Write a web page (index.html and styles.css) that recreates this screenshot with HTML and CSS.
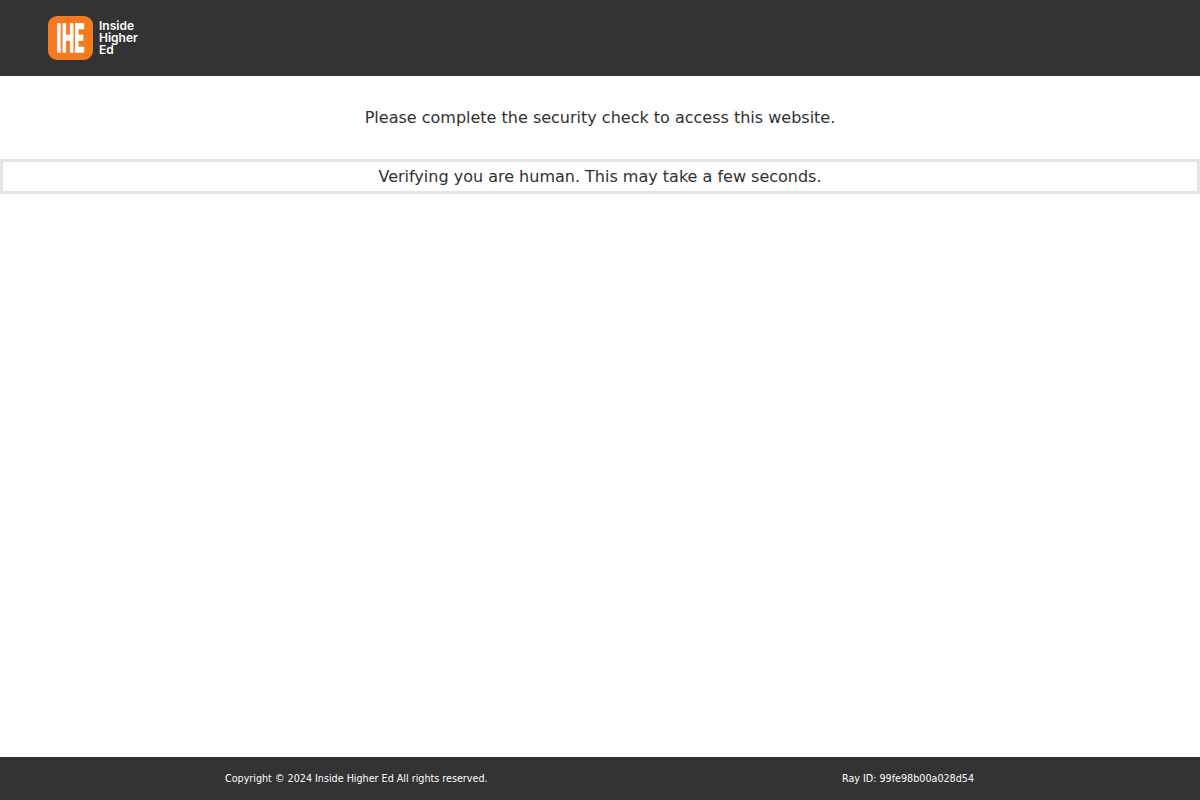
FILE: index.html
```html
<!DOCTYPE html>
<html lang="en">
<head>
<meta charset="utf-8">
<title>Inside Higher Ed</title>
<link rel="stylesheet" href="styles.css">
</head>
<body>
<header class="header">
  <div class="logo">
    <svg class="logo-mark" width="45" height="44" viewBox="0 0 45 44" aria-hidden="true">
      <rect width="45" height="44" rx="9" fill="#f37a21"/>
      <text class="logo-letters" transform="translate(22.5 36) scale(.44 1)" text-anchor="middle">IHE</text>
    </svg>
    <div class="logo-text">Inside<br>Higher<br>Ed</div>
  </div>
</header>
<main class="main">
  <p class="intro">Please complete the security check to access this website.</p>
  <div class="verify">Verifying you are human. This may take a few seconds.</div>
</main>
<footer class="footer">
  <span>Copyright © 2024 Inside Higher Ed All rights reserved.</span>
  <span>Ray ID: 99fe98b00a028d54</span>
</footer>
</body>
</html>
```

FILE: styles.css
```css
* { box-sizing: border-box; }
html, body { height: 100%; }
body {
  margin: 0;
  min-height: 100vh;
  display: flex;
  flex-direction: column;
  font-family: "DejaVu Sans", sans-serif;
  color: #313131;
  background: #fff;
}
.header {
  height: 76px;
  flex: none;
  background: #333;
  display: flex;
  align-items: center;
  padding-left: 48px;
}
.logo { display: flex; align-items: center; gap: 6px; }
.logo-mark { display: block; }
.logo-letters {
  font-family: "Roboto", sans-serif;
  font-weight: 700;
  font-size: 39px;
  letter-spacing: 1px;
  fill: #fff;
  stroke: #fff;
  stroke-width: 1.6px;
}
.logo-text {
  font-family: "Inter", sans-serif;
  font-weight: 600;
  font-size: 12px;
  line-height: 12px;
  color: #fff;
}
.main { flex: 1; }
.intro {
  margin: 0;
  padding-top: 32px;
  height: 83px;
  text-align: center;
  font-size: 16px;
  line-height: 20px;
}
.verify {
  height: 35px;
  border: 3px solid #e5e5e5;
  text-align: center;
  font-size: 16px;
  line-height: 29px;
}
.footer {
  height: 43px;
  flex: none;
  background: #333;
  color: #fff;
  font-size: 9.6px;
  display: flex;
  align-items: center;
  justify-content: space-between;
  padding: 0 226px 0 225px;
}
```
